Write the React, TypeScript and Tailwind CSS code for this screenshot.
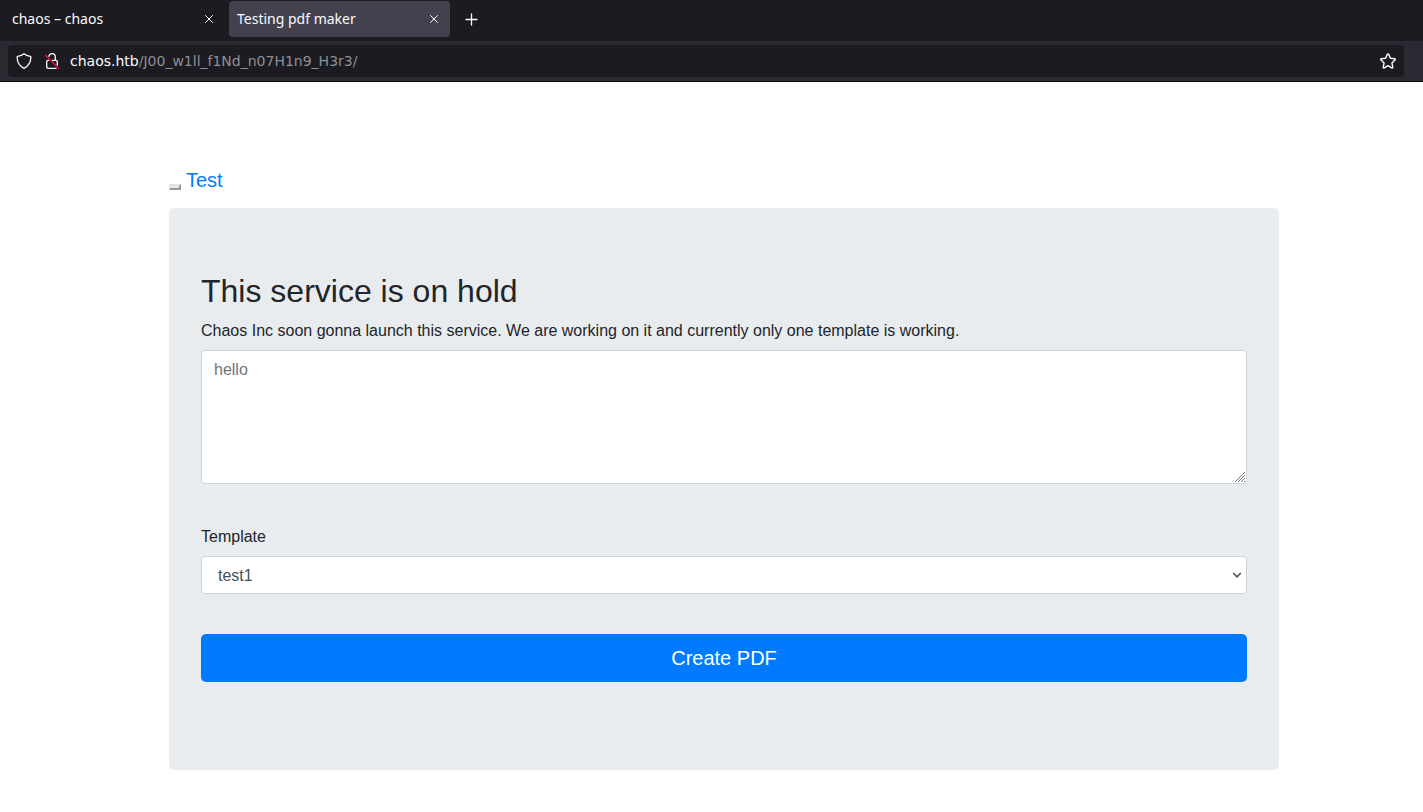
import type { ReactNode } from "react";

function Glyph({ size, children }: { size: number; children: ReactNode }) {
  return (
    <svg
      width={size}
      height={size}
      viewBox={`0 0 ${size} ${size}`}
      fill="none"
      stroke="currentColor"
      strokeLinecap="round"
      strokeLinejoin="round"
      aria-hidden="true"
      className="block shrink-0"
    >
      {children}
    </svg>
  );
}

function Tab({ title, active = false }: { title: string; active?: boolean }) {
  return (
    <div
      className={`flex h-9 w-[221px] items-center justify-between rounded px-2 ${
        active ? "bg-[#42414d]" : ""
      }`}
    >
      <span className="font-['Noto_Sans',sans-serif] text-sm">{title}</span>
      <button type="button" aria-label={`Close ${title}`} className="flex size-4 items-center justify-center">
        <Glyph size={16}>
          <path d="M4.500 4.500l7 7M11.500 4.500l-7 7" />
        </Glyph>
      </button>
    </div>
  );
}

function BrowserBar() {
  return (
    <header className="border-b border-[#0c0c0d] bg-[#2b2a33] text-[#fbfbfe]">
      <div className="flex h-[41px] items-start gap-1 bg-[#1c1b22] pt-px pl-1">
        <Tab title="chaos – chaos" />
        <Tab title="Testing pdf maker" active />
        <button type="button" aria-label="New tab" className="ml-1 flex h-9 w-7 items-center justify-center">
          <Glyph size={16}>
            <path d="M7.500 3v11M2 8.500h11" strokeWidth="1.300" />
          </Glyph>
        </button>
      </div>
      <div className="flex h-10 items-center pr-[19px] pl-2">
        <div className="flex h-8 flex-1 items-center rounded bg-[#1c1b22] px-2">
          <Glyph size={16}>
            <path
              d="M8 .8C9.800 2.300 12 3 14.200 3.300c.5.100.7.4.7.8C14.800 9 13 13 8 15.300 3 13 1.200 9 1.100 4.100c0-.4.2-.7.7-.8C4 3 6.200 2.300 8 .8z"
              strokeWidth="1.300"
            />
          </Glyph>
          <span className="ml-3">
            <Glyph size={16}>
              <path
                d="M4.900 3.300C5.400 1.600 6.600.7 8 .7c1.900 0 3.300 1.500 3.300 3.400v3.200M4.600 7.300H4c-.8 0-1.300.5-1.300 1.300v5.400c0 .8.5 1.300 1.300 1.300h8M8.500 7.300H12c.8 0 1.300.5 1.300 1.300v3.600"
                strokeWidth="1.300"
              />
              <path d="M1.500 2.200L14.800 15.500" stroke="#e5143f" strokeWidth="1.500" />
            </Glyph>
          </span>
          <p className="ml-[10px] flex-1 font-['DejaVu_Sans',sans-serif] text-sm text-[#8f8f94]">
            <span className="text-[#fbfbfe]">chaos.htb</span>/J00_w1ll_f1Nd_n07H1n9_H3r3/
          </p>
          <button type="button" aria-label="Bookmark this page">
            <Glyph size={16}>
              <path
                d="M7.300 1.400c.3-.6 1.100-.6 1.400 0l1.700 3.900 4.200.4c.7.100.9.8.4 1.300l-3.100 2.900.9 4.200c.1.700-.5 1.100-1.100.8L8 12.700l-3.700 2.200c-.6.3-1.200-.1-1.100-.8l.9-4.200L1 7c-.5-.5-.3-1.200.4-1.300l4.200-.4z"
                strokeWidth="1.400"
              />
            </Glyph>
          </button>
        </div>
      </div>
    </header>
  );
}

export default function App() {
  return (
    <div className="min-h-screen bg-white font-['Liberation_Sans',Arial,sans-serif] text-base text-[#212529]">
      <BrowserBar />
      <main className="pt-[83px] pr-36 pb-10 pl-[169px]">
        <nav className="flex items-end gap-[5px]">
          <button
            type="button"
            aria-label="Toggle navigation"
            className="mb-[5px] h-[6px] w-3 border-2 border-t-[#e3e3e3] border-r-[#979797] border-b-[#979797] border-l-[#e3e3e3] bg-[#e9e9ed]"
          />
          <a href="#test" className="text-xl leading-[30px] text-[#007bff]">
            Test
          </a>
        </nav>
        <form className="mt-[13px] rounded-[5px] bg-[#e9ecef] px-8 pt-16 pb-[88px]" onSubmit={(e) => e.preventDefault()}>
          <h2 className="text-[32px] leading-[38px]">This service is on hold</h2>
          <label htmlFor="content" className="mt-2 block leading-[26px]">
            Chaos Inc soon gonna launch this service. We are working on it and currently only one template is working.
          </label>
          <div className="relative mt-[6px]">
            <textarea
              id="content"
              rows={5}
              placeholder="hello"
              className="block w-full resize-none rounded border border-[#ced4da] bg-white px-3 pt-[7px] pb-[5px] placeholder:text-[#6c757d]"
            />
            <svg
              width="10"
              height="10"
              viewBox="0 0 10 10"
              stroke="#777"
              shapeRendering="crispEdges"
              aria-hidden="true"
              className="pointer-events-none absolute right-[2px] bottom-[2px]"
            >
              <path d="M0 10L10 0M3 10L10 3M6 10L10 6M9 10L10 9" />
            </svg>
          </div>
          <label htmlFor="template" className="mt-10 block leading-[26px]">
            Template
          </label>
          <div className="relative mt-[6px]">
            <select
              id="template"
              className="block h-[38px] w-full appearance-none rounded border border-[#ced4da] bg-white px-4 pt-[2px] text-[#495057]"
            >
              <option>test1</option>
            </select>
            <svg
              width="10"
              height="6"
              viewBox="0 0 10 6"
              fill="none"
              stroke="#495057"
              strokeWidth="1.600"
              aria-hidden="true"
              className="pointer-events-none absolute top-4 right-[5px]"
            >
              <path d="M1.200 1L5 4.800 8.800 1" />
            </svg>
          </div>
          <button type="submit" className="mt-10 block h-12 w-full rounded-[5px] bg-[#007bff] text-xl text-white">
            Create PDF
          </button>
        </form>
      </main>
    </div>
  );
}
